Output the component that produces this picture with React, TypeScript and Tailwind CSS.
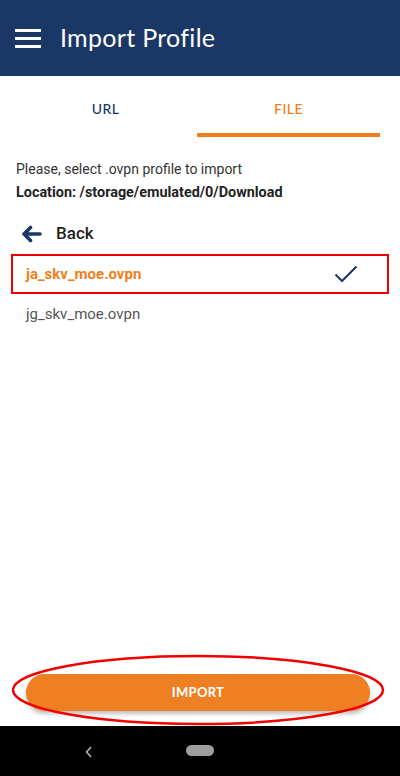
import React from "react";

export default function App() {
  return (
    <div className="w-[400px] h-[776px] flex flex-col bg-white relative overflow-hidden" style={{ fontFamily: "Roboto, 'Noto Sans', sans-serif" }}>
      {/* Header */}
      <div className="h-[76px] bg-[#1b3766] flex items-center shrink-0">
        <div className="ml-[15px] w-[26px] flex flex-col gap-[5px] mt-[1px]">
          <div className="h-[3px] bg-white" />
          <div className="h-[3px] bg-white" />
          <div className="h-[3px] bg-white" />
        </div>
        <div className="ml-[19px] text-white text-[25px] tracking-[0.3px]" style={{ fontFamily: "Lato, 'Open Sans', sans-serif" }}>
          Import Profile
        </div>
      </div>

      {/* Tabs */}
      <div className="flex ml-[14px] mr-[20px] h-[61px]" style={{ fontFamily: "Lato, 'Open Sans', sans-serif" }}>
        <div className="flex-1 flex flex-col">
          <div className="flex-1 flex items-center justify-center pt-[8px] text-[14px] text-[#1b3766] font-medium tracking-[0.4px]">URL</div>
          <div className="h-[4px]" />
        </div>
        <div className="flex-1 flex flex-col">
          <div className="flex-1 flex items-center justify-center pt-[8px] text-[14px] text-[#ef7f1a] font-medium tracking-[0.4px]">FILE</div>
          <div className="h-[4px] bg-[#ef7f1a]" />
        </div>
      </div>

      {/* Content */}
      <div className="px-[16px] pt-[20px]">
        <div className="text-[14px] text-[#333] leading-[24px]">Please, select .ovpn profile to import</div>
        <div className="text-[14.4px] text-[#222] font-bold leading-[24px]">Location: /storage/emulated/0/Download</div>
      </div>

      <div className="flex items-center h-[40px] mt-[9px] pl-[20px]">
        <svg width="22" height="18" viewBox="0 0 22 18" className="shrink-0">
          <path d="M20 9H4M10.5 2.5L4 9l6.5 6.5" fill="none" stroke="#1b3766" strokeWidth="3.6" strokeLinecap="round" strokeLinejoin="round" />
        </svg>
        <span className="ml-[14px] text-[17px] font-medium text-[#222]">Back</span>
      </div>

      <div className="mx-[11px] h-[40px] border-2 border-[#f00000] flex items-center pl-[13px] pr-[29px]">
        <span className="flex-1 text-[15px] font-bold text-[#ef7f1a]">ja_skv_moe.ovpn</span>
        <svg width="24" height="18" viewBox="0 0 24 18">
          <path d="M1.5 9.5l6.5 6.5L22.5 1.5" fill="none" stroke="#1b3766" strokeWidth="2" />
        </svg>
      </div>

      <div className="h-[40px] flex items-center pl-[26px] text-[15px] text-[#555]">jg_skv_moe.ovpn</div>

      <div className="flex-1" />

      {/* Import button */}
      <div className="relative h-[72px] shrink-0 pl-[26px] pr-[30px] pt-[20px]">
        <button className="w-full h-[37px] rounded-full bg-[#ee8023] text-white text-[13px] font-bold tracking-[0.3px] shadow-[0_3px_4px_rgba(0,0,0,0.25)]" style={{ fontFamily: "Lato, 'Open Sans', sans-serif" }}>
          IMPORT
        </button>
        <svg className="absolute left-0 top-0 pointer-events-none" width="400" height="72" viewBox="0 0 400 72">
          <ellipse cx="198" cy="36" rx="185" ry="34" fill="none" stroke="#f00000" strokeWidth="2.5" />
        </svg>
      </div>

      {/* Nav bar */}
      <div className="h-[50px] bg-black shrink-0 relative flex items-center">
        <svg className="absolute left-[85px] top-[20px]" width="8" height="12" viewBox="0 0 8 12">
          <path d="M6 1L1.5 6 6 11" fill="none" stroke="#bbb" strokeWidth="1.5" />
        </svg>
        <div className="absolute left-[186px] top-[19px] w-[28px] h-[11px] rounded-full bg-[#9e9e9e]" />
      </div>
    </div>
  );
}
